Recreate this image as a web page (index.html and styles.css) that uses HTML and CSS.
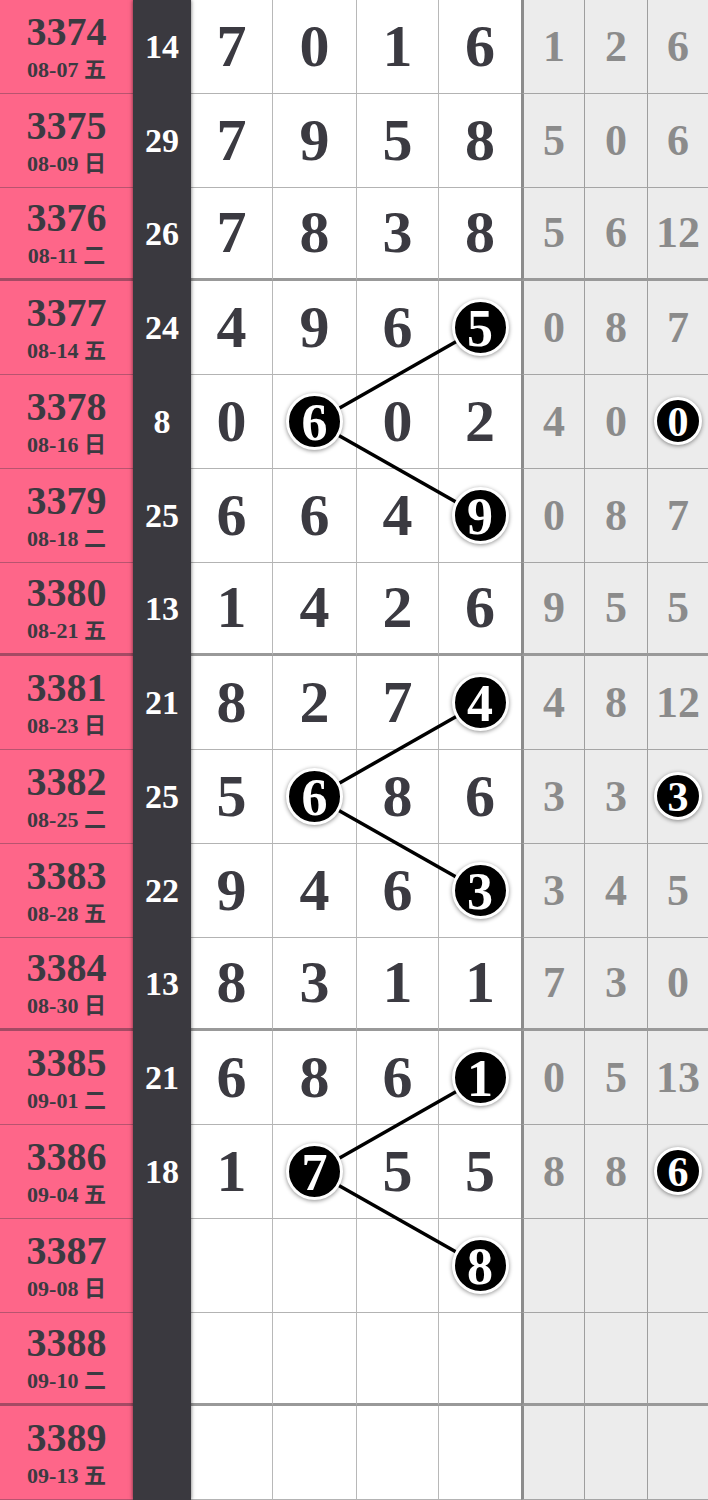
FILE: index.html
```html
<!DOCTYPE html>
<html lang="zh">
<head>
  <meta charset="UTF-8">
  <meta name="viewport" content="width=device-width, initial-scale=1.0">
  <title>走势图</title>
  <link rel="stylesheet" href="styles.css">
</head>
<body>
  <div class="chart">
    <div class="sums">
      <span>14</span><span>29</span><span>26</span><span>24</span>
      <span>8</span><span>25</span><span>13</span><span>21</span>
      <span>25</span><span>22</span><span>13</span><span>21</span>
      <span>18</span><span></span><span></span><span></span>
    </div>

    <div class="row">
      <div class="issue"><b>3374</b><small>08-07 五</small></div>
      <div class="cell">7</div><div class="cell">0</div><div class="cell">1</div><div class="cell">6</div>
      <div class="gap first">1</div><div class="gap">2</div><div class="gap">6</div>
    </div>
    <div class="row">
      <div class="issue"><b>3375</b><small>08-09 日</small></div>
      <div class="cell">7</div><div class="cell">9</div><div class="cell">5</div><div class="cell">8</div>
      <div class="gap first">5</div><div class="gap">0</div><div class="gap">6</div>
    </div>
    <div class="row end">
      <div class="issue"><b>3376</b><small>08-11 二</small></div>
      <div class="cell">7</div><div class="cell">8</div><div class="cell">3</div><div class="cell">8</div>
      <div class="gap first">5</div><div class="gap">6</div><div class="gap">12</div>
    </div>

    <div class="row">
      <div class="issue"><b>3377</b><small>08-14 五</small></div>
      <div class="cell">4</div><div class="cell">9</div><div class="cell">6</div><div class="cell"><span class="ball">5</span></div>
      <div class="gap first">0</div><div class="gap">8</div><div class="gap">7</div>
    </div>
    <div class="row">
      <div class="issue"><b>3378</b><small>08-16 日</small></div>
      <div class="cell">0</div><div class="cell"><span class="ball">6</span></div><div class="cell">0</div><div class="cell">2</div>
      <div class="gap first">4</div><div class="gap">0</div><div class="gap"><span class="ball small">0</span></div>
    </div>
    <div class="row">
      <div class="issue"><b>3379</b><small>08-18 二</small></div>
      <div class="cell">6</div><div class="cell">6</div><div class="cell">4</div><div class="cell"><span class="ball">9</span></div>
      <div class="gap first">0</div><div class="gap">8</div><div class="gap">7</div>
    </div>
    <div class="row end">
      <div class="issue"><b>3380</b><small>08-21 五</small></div>
      <div class="cell">1</div><div class="cell">4</div><div class="cell">2</div><div class="cell">6</div>
      <div class="gap first">9</div><div class="gap">5</div><div class="gap">5</div>
    </div>

    <div class="row">
      <div class="issue"><b>3381</b><small>08-23 日</small></div>
      <div class="cell">8</div><div class="cell">2</div><div class="cell">7</div><div class="cell"><span class="ball">4</span></div>
      <div class="gap first">4</div><div class="gap">8</div><div class="gap">12</div>
    </div>
    <div class="row">
      <div class="issue"><b>3382</b><small>08-25 二</small></div>
      <div class="cell">5</div><div class="cell"><span class="ball">6</span></div><div class="cell">8</div><div class="cell">6</div>
      <div class="gap first">3</div><div class="gap">3</div><div class="gap"><span class="ball small">3</span></div>
    </div>
    <div class="row">
      <div class="issue"><b>3383</b><small>08-28 五</small></div>
      <div class="cell">9</div><div class="cell">4</div><div class="cell">6</div><div class="cell"><span class="ball">3</span></div>
      <div class="gap first">3</div><div class="gap">4</div><div class="gap">5</div>
    </div>
    <div class="row end">
      <div class="issue"><b>3384</b><small>08-30 日</small></div>
      <div class="cell">8</div><div class="cell">3</div><div class="cell">1</div><div class="cell">1</div>
      <div class="gap first">7</div><div class="gap">3</div><div class="gap">0</div>
    </div>

    <div class="row">
      <div class="issue"><b>3385</b><small>09-01 二</small></div>
      <div class="cell">6</div><div class="cell">8</div><div class="cell">6</div><div class="cell"><span class="ball">1</span></div>
      <div class="gap first">0</div><div class="gap">5</div><div class="gap">13</div>
    </div>
    <div class="row">
      <div class="issue"><b>3386</b><small>09-04 五</small></div>
      <div class="cell">1</div><div class="cell"><span class="ball">7</span></div><div class="cell">5</div><div class="cell">5</div>
      <div class="gap first">8</div><div class="gap">8</div><div class="gap"><span class="ball small">6</span></div>
    </div>
    <div class="row">
      <div class="issue"><b>3387</b><small>09-08 日</small></div>
      <div class="cell"></div><div class="cell"></div><div class="cell"></div><div class="cell"><span class="ball">8</span></div>
      <div class="gap first"></div><div class="gap"></div><div class="gap"></div>
    </div>
    <div class="row end">
      <div class="issue"><b>3388</b><small>09-10 二</small></div>
      <div class="cell"></div><div class="cell"></div><div class="cell"></div><div class="cell"></div>
      <div class="gap first"></div><div class="gap"></div><div class="gap"></div>
    </div>

    <div class="row">
      <div class="issue"><b>3389</b><small>09-13 五</small></div>
      <div class="cell"></div><div class="cell"></div><div class="cell"></div><div class="cell"></div>
      <div class="gap first"></div><div class="gap"></div><div class="gap"></div>
    </div>

    <!-- lines joining the balls -->
    <svg class="links" width="708" height="1500" viewBox="0 0 708 1500">
      <g stroke="#000" stroke-width="3.5">
        <line x1="315" y1="421.9" x2="480" y2="328.1"/>
        <line x1="315" y1="421.9" x2="480" y2="515.6"/>
        <line x1="315" y1="796.9" x2="480" y2="703.1"/>
        <line x1="315" y1="796.9" x2="480" y2="890.6"/>
        <line x1="315" y1="1171.9" x2="480" y2="1078.1"/>
        <line x1="315" y1="1171.9" x2="480" y2="1265.6"/>
      </g>
    </svg>
  </div>
</body>
</html>
```

FILE: styles.css
```css
body {
  margin: 0;
  background: #ffffff;
  font-family: "Liberation Serif", "Noto Sans CJK SC", serif;
  font-weight: bold;
  color: #3b3a41;
}
.chart {
  position: relative;
  display: grid;
  grid-template-columns: 133px 58px 82px 84px 82px 82px 64px 63px 60px;
  grid-template-rows: repeat(16, 93.75px);
  width: 708px;
  overflow: hidden;
}
.row {
  display: contents;
}
.issue {
  box-sizing: border-box;
  background: #fe6689;
  border-bottom: 1px solid #b8546f;
  display: flex;
  flex-direction: column;
  align-items: center;
  justify-content: center;
  padding-top: 2px;
}
.issue b {
  font-size: 40px;
  line-height: 44px;
}
.issue small {
  font-size: 22px;
  line-height: 31px;
}
.sums {
  grid-column: 2;
  grid-row: 1 / span 16;
  background: #3a393f;
  box-shadow: 0 0 4px rgba(0, 0, 0, 0.6);
  display: flex;
  flex-direction: column;
  z-index: 1;
}
.sums span {
  height: 93.75px;
  display: flex;
  align-items: center;
  justify-content: center;
  color: #ffffff;
  font-size: 34px;
}
.cell, .gap {
  box-sizing: border-box;
  display: flex;
  align-items: center;
  justify-content: center;
  border-bottom: 1px solid #b3b3b3;
}
.cell {
  font-size: 60px;
  border-right: 1px solid #b8b8b8;
}
.cell:nth-child(5) {
  border-right: none;
}
.gap {
  background: #ececec;
  color: #8b8b8b;
  font-size: 44px;
  border-bottom-color: #a5a5a5;
  border-right: 1px solid #9e9e9e;
}
.gap:last-child {
  border-right: none;
}
.gap.first {
  border-left: 3px solid #8c8c8c;
}
.row.end .cell, .row.end .gap {
  border-bottom: 3px solid #999999;
}
.row.end .issue {
  border-bottom: 3px solid #a54a64;
}
.ball {
  position: relative;
  z-index: 2;
  width: 51px;
  height: 51px;
  border: 3px solid #ffffff;
  border-radius: 50%;
  background: #000000;
  color: #ffffff;
  font-size: 52px;
  line-height: 53px;
  text-align: center;
  box-shadow: 0 1px 4px rgba(0, 0, 0, 0.45);
}
.ball.small {
  width: 42px;
  height: 42px;
  font-size: 42px;
  line-height: 44px;
}
.links {
  position: absolute;
  top: 0;
  left: 0;
  z-index: 1;
  pointer-events: none;
}
```
